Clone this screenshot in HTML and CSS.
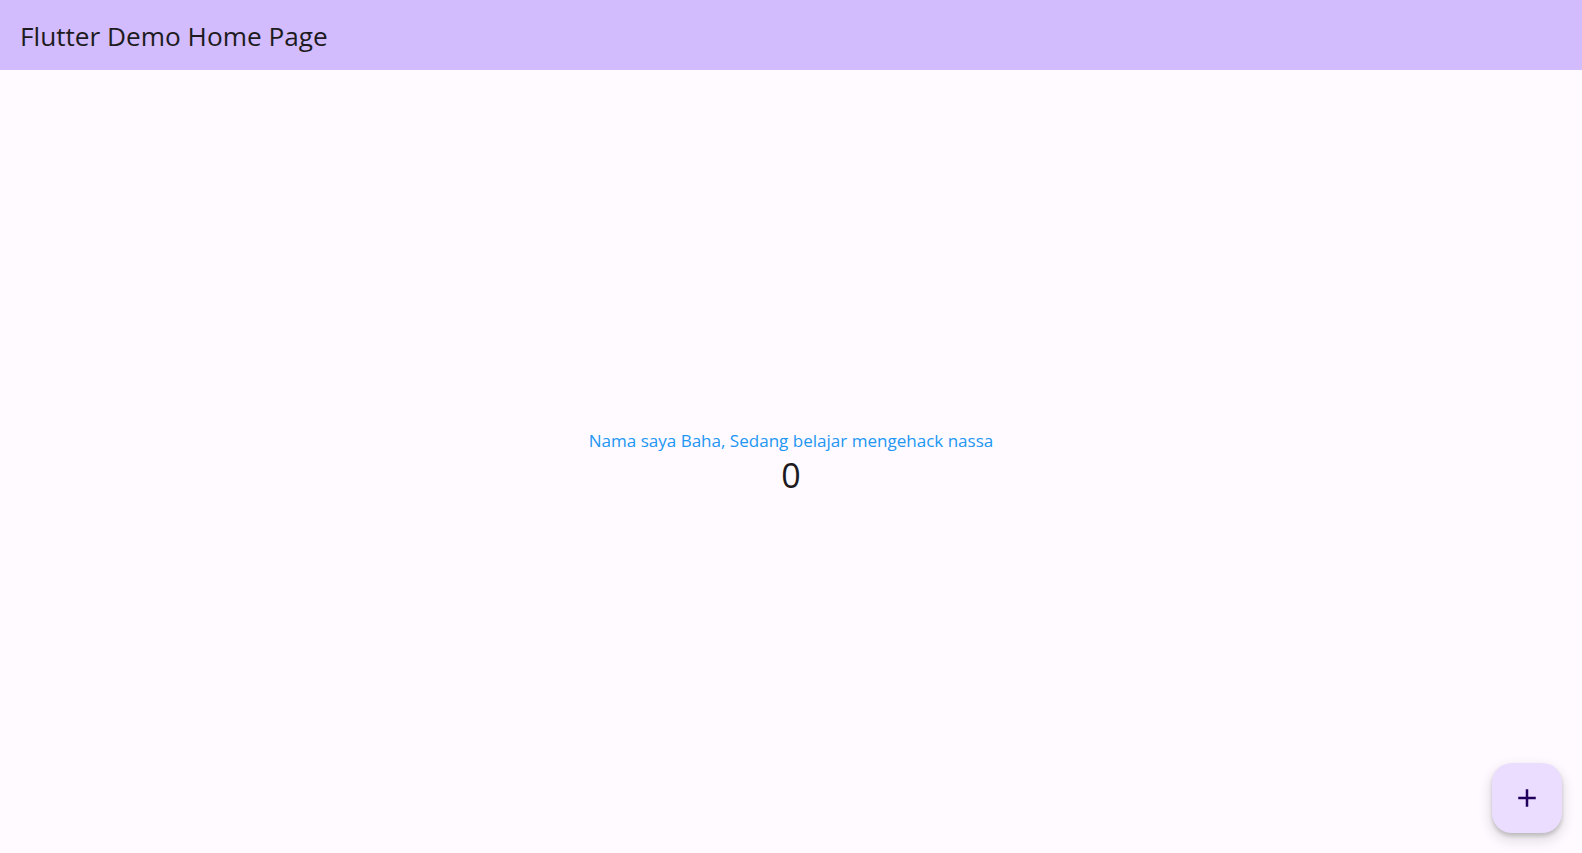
FILE: index.html
```html
<!DOCTYPE html>
<html lang="en">
<head>
<meta charset="utf-8">
<title>Flutter Demo Home Page</title>
<link rel="stylesheet" href="styles.css">
</head>
<body>
<div class="app">
  <header class="appbar">
    <h1 class="title">Flutter Demo Home Page</h1>
  </header>
  <main class="content">
    <p class="message">Nama saya Baha, Sedang belajar mengehack nassa</p>
    <p class="counter">0</p>
  </main>
  <button class="fab" aria-label="Increment">
    <svg width="30" height="30" viewBox="0 0 24 24"><path d="M19 13h-6v6h-2v-6H5v-2h6V5h2v6h6v2z" fill="#21005D"/></svg>
  </button>
</div>
</body>
</html>
```
FILE: styles.css
```css
* { box-sizing: border-box; }
html, body { margin: 0; height: 100%; }
body {
  font-family: "Open Sans", "Noto Sans", sans-serif;
  background: #FEFAFF;
  color: #1D1B20;
}
.app {
  height: 100vh;
  display: flex;
  flex-direction: column;
}
.appbar {
  height: 70px;
  flex: none;
  background: #D3BCFD;
  display: flex;
  align-items: center;
  padding: 2px 20px 0;
}
.title {
  margin: 0;
  font-weight: 400;
  font-size: 26.2px;
  color: #1D1B20;
  letter-spacing: 0;
}
.content {
  flex: 1;
  display: flex;
  flex-direction: column;
  align-items: center;
  justify-content: center;
  padding-top: 3px;
}
.message {
  margin: 0;
  font-size: 17.05px;
  line-height: 25px;
  color: #2196F3;
}
.counter {
  margin: 0;
  font-size: 34px;
  line-height: 45px;
  color: #1D1B20;
}
.fab {
  position: fixed;
  right: 20px;
  bottom: 20px;
  width: 70px;
  height: 70px;
  border: none;
  border-radius: 20px;
  background: #EADDFF;
  display: flex;
  align-items: center;
  justify-content: center;
  box-shadow: 0 3px 4px rgba(0,0,0,0.18), 0 6px 12px 3px rgba(0,0,0,0.10);
  padding: 0;
}
```
